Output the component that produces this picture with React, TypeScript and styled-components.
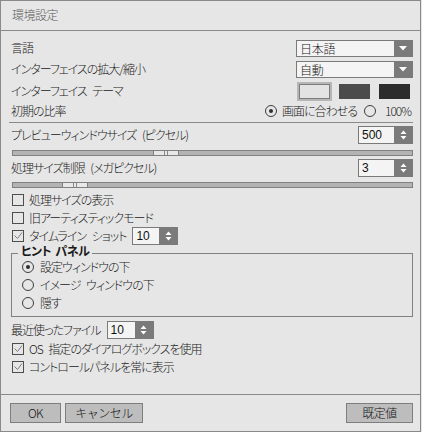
import styled, { createGlobalStyle } from 'styled-components';

const GlobalStyle = createGlobalStyle`
  html, body {
    margin: 0;
    padding: 0;
    background: #e6e6e6;
  }
  body {
    font-family: "Noto Sans CJK JP", "Noto Sans", sans-serif;
    font-size: 12px;
    font-weight: 300;
    line-height: 1.2;
    letter-spacing: -1px;
    word-spacing: 4px;
    color: #1a1a1a;
    font-feature-settings: "palt";
  }
  * {
    box-sizing: border-box;
  }
`;

const Window = styled.div`
  width: 421px;
  height: 432px;
  border: 1px solid #8a8a8a;
  background: #e6e6e6;
  display: flex;
  flex-direction: column;
`;

const TitleBar = styled.div`
  height: 30px;
  border-bottom: 1px solid #8a8a8a;
  display: flex;
  align-items: center;
  padding-left: 11px;
  color: #5c5c5c;
  letter-spacing: -0.5px;
`;

const Body = styled.div`
  flex: 1;
  display: flex;
  flex-direction: column;
  padding: 7px 7px 0 10px;
`;

const Row = styled.div<{ $h: number; $mt?: number }>`
  height: ${(p) => p.$h}px;
  margin-top: ${(p) => p.$mt ?? 0}px;
  display: flex;
  align-items: center;
  justify-content: space-between;
  white-space: nowrap;
`;

const Separator = styled.div`
  height: 1px;
  margin: 2px 0 0 -2px;
  background: #8a8a8a;
`;

const Select = styled.div`
  width: 117px;
  height: 17px;
  display: flex;
  border: 1px solid #7a7a7a;
  background: #f4f4f4;

  span {
    flex: 1;
    padding-left: 3px;
    line-height: 15px;
    letter-spacing: -0.3px;
  }

  .arrow {
    width: 18px;
    background: #7a7a7a;
    display: flex;
    align-items: center;
    justify-content: center;
  }
`;

const Swatches = styled.div`
  display: flex;
  gap: 9px;
  margin-right: 3px;
`;

const Swatch = styled.div<{ $color: string; $selected?: boolean }>`
  width: 31px;
  height: 15px;
  background: ${(p) => p.$color};
  border: 1px solid ${(p) => (p.$selected ? '#7c7c7c' : p.$color)};
  box-shadow: ${(p) => (p.$selected ? '0 0 0 2px #b6b6b6' : 'none')};
`;

const RadioGroup = styled.div`
  display: flex;
  align-items: center;
  margin-right: 2px;
`;

const RadioItem = styled.label<{ $gap: number; $ml?: number }>`
  display: flex;
  align-items: center;
  gap: ${(p) => p.$gap}px;
  margin-left: ${(p) => p.$ml ?? 0}px;
`;

const RadioCircle = styled.span<{ $on?: boolean }>`
  width: 12px;
  height: 12px;
  border: 1px solid #3e3e3e;
  border-radius: 50%;
  display: flex;
  align-items: center;
  justify-content: center;

  &::after {
    content: '';
    width: 4px;
    height: 4px;
    border-radius: 50%;
    background: ${(p) => (p.$on ? '#2e2e2e' : 'transparent')};
  }
`;

const Spin = styled.div<{ $w: number }>`
  width: ${(p) => p.$w}px;
  height: 18px;
  display: flex;
  border: 1px solid #7a7a7a;
  background: #f4f4f4;

  span {
    flex: 1;
    padding-left: 3px;
    line-height: 16px;
    font-family: "Liberation Sans", sans-serif;
    font-size: 12px;
    font-weight: 400;
    letter-spacing: 0;
    color: #111;
  }

  .arrows {
    width: 18px;
    background: #7a7a7a;
    display: flex;
    align-items: center;
    justify-content: center;
  }
`;

const Track = styled.div<{ $mt: number }>`
  position: relative;
  height: 6px;
  margin: ${(p) => p.$mt}px 0 0 1px;
  border: 1px solid #808080;
  background: #b3b3b3;
`;

const Thumb = styled.div<{ $pos: number }>`
  position: absolute;
  top: -1px;
  left: ${(p) => p.$pos}%;
  width: 26px;
  height: 6px;
  border: 1px solid #808080;
  background: #e8e8e8;
  display: flex;
  justify-content: center;
  gap: 2px;

  &::before,
  &::after {
    content: '';
    width: 1px;
    background: #8a8a8a;
  }
`;

const CheckRow = styled.label<{ $h: number; $mt?: number }>`
  height: ${(p) => p.$h}px;
  margin-top: ${(p) => p.$mt ?? 0}px;
  display: flex;
  align-items: center;
  gap: 5px;
  padding-left: 1px;
  white-space: nowrap;
`;

const Box = styled.span`
  width: 12px;
  height: 12px;
  border: 1px solid #4e4e4e;
  display: flex;
  align-items: center;
  justify-content: center;
`;

const Group = styled.fieldset`
  margin: 0;
  padding: 0 0 4px 0;
  border: 1px solid #808080;
  min-width: 0;
`;

const Legend = styled.legend`
  font-weight: 700;
  line-height: 12px;
  letter-spacing: -0.5px;
  word-spacing: 2px;
  padding: 0 3px 5px;
  margin-left: 6px;
`;

const GroupInner = styled.div`
  margin-top: -4px;
  padding-left: 10px;
  display: flex;
  flex-direction: column;
`;

const LabelWithSpin = styled.div`
  display: flex;
  align-items: center;
  gap: 6px;
`;

const Footer = styled.div`
  height: 37px;
  border-top: 1px solid #8a8a8a;
  display: flex;
  align-items: center;
  padding: 0 7px 0 9px;
  gap: 4px;
`;

const Button = styled.button<{ $w: number; $push?: boolean }>`
  width: ${(p) => p.$w}px;
  height: 20px;
  margin-left: ${(p) => (p.$push ? 'auto' : '0')};
  border: 1px solid #7e7e7e;
  background: #bdbdbd;
  font-family: inherit;
  font-size: 12px;
  font-weight: 300;
  letter-spacing: -0.5px;
  color: #111;
  padding: 0;
  line-height: 18px;
`;

function DownArrow() {
  return (
    <svg width="8" height="5" viewBox="0 0 8 5">
      <path d="M0 0h8L4 4.5z" fill="#fff" />
    </svg>
  );
}

function SpinArrows() {
  return (
    <svg width="7" height="10" viewBox="0 0 7 10">
      <path d="M0.5 4h6L3.5 0.5z" fill="#fff" />
      <path d="M0.5 6h6L3.5 9.5z" fill="#fff" />
    </svg>
  );
}

function Check() {
  return (
    <svg width="10" height="10" viewBox="0 0 10 10">
      <path d="M1.5 4.5l3 3L9 1.5" fill="none" stroke="#7c7c7c" strokeWidth="1" />
    </svg>
  );
}

function Checkbox({ label, checked, h, mt }: { label: string; checked?: boolean; h: number; mt?: number }) {
  return (
    <CheckRow $h={h} $mt={mt}>
      <Box>{checked && <Check />}</Box>
      {label}
    </CheckRow>
  );
}

function SpinBox({ value, w }: { value: string; w: number }) {
  return (
    <Spin $w={w}>
      <span>{value}</span>
      <div className="arrows">
        <SpinArrows />
      </div>
    </Spin>
  );
}

export default function App() {
  return (
    <>
      <GlobalStyle />
      <Window>
        <TitleBar>環境設定</TitleBar>
        <Body>
          <Row $h={21}>
            <span>言語</span>
            <Select>
              <span>日本語</span>
              <div className="arrow">
                <DownArrow />
              </div>
            </Select>
          </Row>
          <Row $h={21}>
            <span>インターフェイスの拡大/縮小</span>
            <Select>
              <span>自動</span>
              <div className="arrow">
                <DownArrow />
              </div>
            </Select>
          </Row>
          <Row $h={22}>
            <span>インターフェイス テーマ</span>
            <Swatches>
              <Swatch $color="#e3e3e3" $selected />
              <Swatch $color="#4b4b4b" />
              <Swatch $color="#2c2c2c" />
            </Swatches>
          </Row>
          <Row $h={18}>
            <span>初期の比率</span>
            <RadioGroup>
              <RadioItem $gap={5}>
                <RadioCircle $on />
                画面に合わせる
              </RadioItem>
              <RadioItem $gap={9} $ml={7}>
                <RadioCircle />
                100%
              </RadioItem>
            </RadioGroup>
          </Row>
          <Separator />
          <Row $h={22} $mt={1}>
            <span>プレビューウィンドウサイズ (ピクセル)</span>
            <SpinBox value="500" w={55} />
          </Row>
          <Track $mt={4}>
            <Thumb $pos={35} />
          </Track>
          <Row $h={22} $mt={1}>
            <span>処理サイズ制限 (メガピクセル)</span>
            <SpinBox value="3" w={55} />
          </Row>
          <Track $mt={3}>
            <Thumb $pos={12.2} />
          </Track>
          <Checkbox label="処理サイズの表示" h={18} mt={3} />
          <Checkbox label="旧アーティスティックモード" h={18} />
          <CheckRow $h={18}>
            <Box>
              <Check />
            </Box>
            <LabelWithSpin>
              タイムライン ショット
              <SpinBox value="10" w={46} />
            </LabelWithSpin>
          </CheckRow>
          <Group>
            <Legend>ヒント パネル</Legend>
            <GroupInner>
              <Row $h={18}>
                <RadioItem $gap={6}>
                  <RadioCircle $on />
                  設定ウィンドウの下
                </RadioItem>
              </Row>
              <Row $h={18}>
                <RadioItem $gap={6}>
                  <RadioCircle />
                  イメージ ウィンドウの下
                </RadioItem>
              </Row>
              <Row $h={18}>
                <RadioItem $gap={6}>
                  <RadioCircle />
                  隠す
                </RadioItem>
              </Row>
            </GroupInner>
          </Group>
          <Row $h={20} $mt={3}>
            <LabelWithSpin>
              最近使ったファイル
              <SpinBox value="10" w={47} />
            </LabelWithSpin>
          </Row>
          <Checkbox label="OS 指定のダイアログボックスを使用" h={18} checked />
          <Checkbox label="コントロールパネルを常に表示" h={18} checked />
        </Body>
        <Footer>
          <Button $w={51}>OK</Button>
          <Button $w={78}>キャンセル</Button>
          <Button $w={67} $push>
            既定値
          </Button>
        </Footer>
      </Window>
    </>
  );
}
